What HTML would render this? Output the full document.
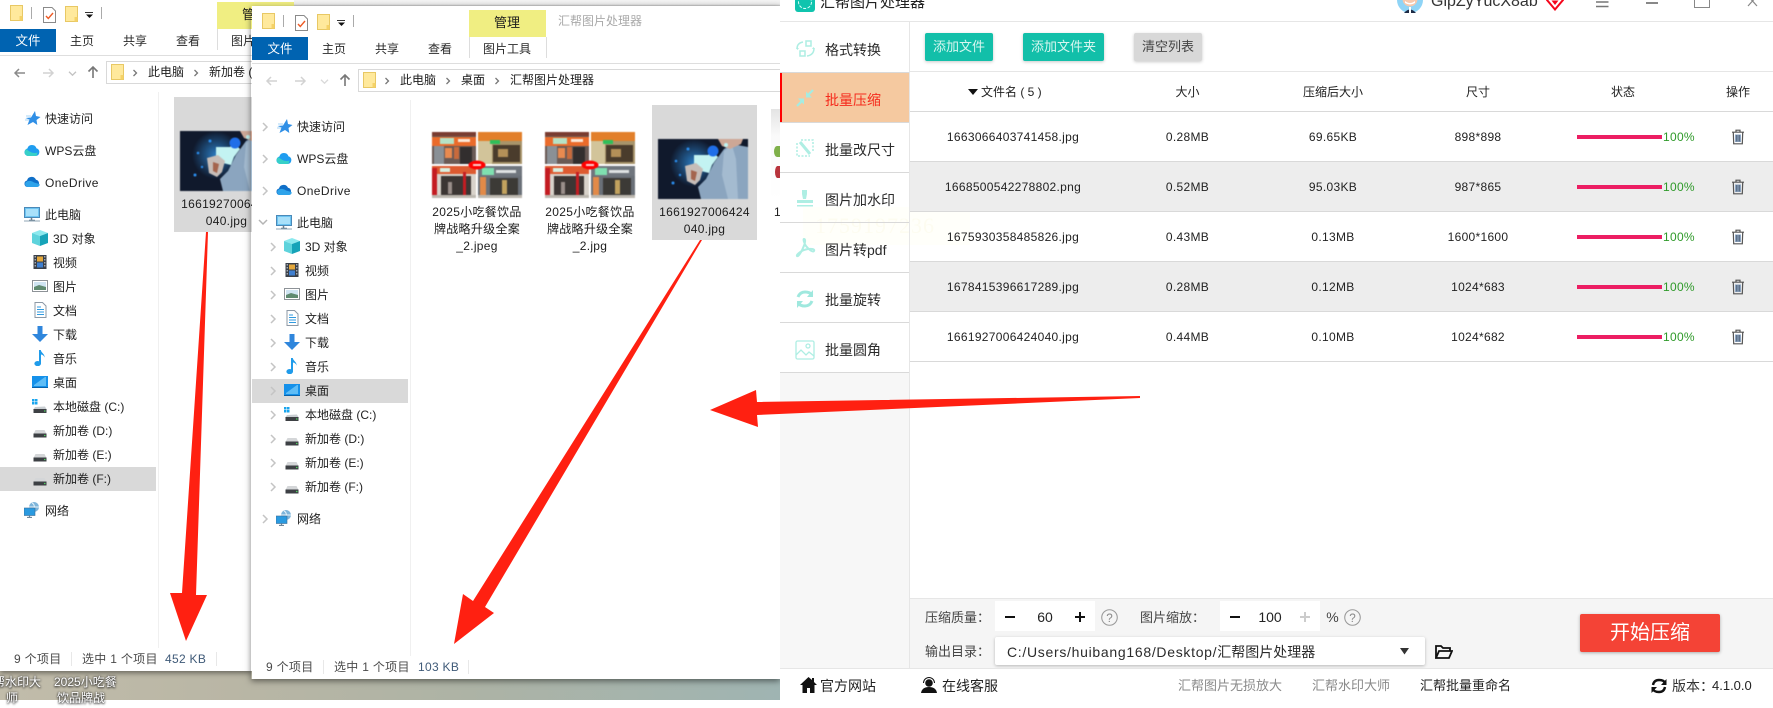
<!DOCTYPE html>
<html lang="zh-CN">
<head>
<meta charset="utf-8">
<title>汇帮图片处理器</title>
<style>
html,body{margin:0;padding:0;background:#fff}
body{position:relative;width:1773px;height:700px;overflow:hidden;font-family:"Liberation Sans","Noto Sans CJK SC",sans-serif;font-size:12px;color:#1c1c1c}
.a{position:absolute}
.t{position:absolute;white-space:nowrap;line-height:20px;height:20px;margin-top:-10px}
.c{transform:translateX(-50%)}
.ic{position:absolute;width:16px;height:16px;margin-top:-8px;overflow:visible}
.ch{position:absolute;width:8px;height:10px;margin-top:-5px;overflow:visible}
.win{position:absolute;width:528px;height:679px;overflow:hidden}
.bg{position:absolute;left:0;right:0;top:6px;bottom:0;background:#fff}
.n{letter-spacing:.3px}
.hl{background:#d9d9d9}
.side .t{color:#222;margin-top:-9px}
.st{color:#4a4a4a}
.tab{color:#2a2a2a}
.app .h{font-size:12px;color:#222}
.app .r{font-size:12px;letter-spacing:.3px;color:#222}
.m{font-size:14px;color:#2b2b2b}
.btn{position:absolute;top:33px;height:28px;line-height:28px;text-align:center;border-radius:2px;font-size:13px;color:#d8f6f0;background:#12bfa9;box-shadow:0 1px 3px rgba(0,0,0,.22)}
.bar{position:absolute;left:1577px;width:85px;height:4px;background:#ec1e63}
.pc{color:#2f9a2a;left:1663px;font-size:12px;letter-spacing:.3px}
.ln{position:absolute;height:1px;background:#d9d9d9}
.lab{font-size:13px;color:#444}
.th{filter:blur(.55px)}
</style>
</head>
<body>
<svg width="0" height="0" style="position:absolute">
<defs>
<symbol id="folder" viewBox="0 0 13 16"><rect x=".5" y=".5" width="12" height="15" fill="#ffe99c" stroke="#e8c864"/><rect x="9.500" y="11" width="3" height="4.500" fill="#f5d267"/></symbol>
<symbol id="note" viewBox="0 0 13 16"><path d="M.5.5h8.500l3.500 3.500v11.500H.5z" fill="#fff" stroke="#8a8a8a"/><path d="M3 9l2.300 2.500L10 6" fill="none" stroke="#ee5a24" stroke-width="1.400"/></symbol>
<symbol id="caret" viewBox="0 0 9 6"><path d="M0 0h8v1H0z" fill="#333"/><path d="M1 2.500h7L4.500 6z" fill="#111"/></symbol>
<symbol id="chev" viewBox="0 0 8 10"><path d="M2 1l4 4-4 4" fill="none" stroke="#c4c4c4" stroke-width="1.500"/></symbol>
<symbol id="chd" viewBox="0 0 10 8"><path d="M1 2l4 4 4-4" fill="none" stroke="#b4b4b4" stroke-width="1.500"/></symbol>
<symbol id="bc" viewBox="0 0 8 10"><path d="M2.500 2l3 3-3 3" fill="none" stroke="#777" stroke-width="1.300"/></symbol>
<symbol id="star" viewBox="0 0 16 16"><path d="M10 1l1 5 4.500 1-4 3 .8 5L8 12l-5.500 3 2-5.500L.5 8l5.500-.5z" fill="#2f8fe6"/><path d="M1 6h5M0 10h4" stroke="#a8d4f5"/></symbol>
<symbol id="wps" viewBox="0 0 16 16"><path d="M4 14a3.800 3.800 0 0 1-.6-7.500 4.700 4.700 0 0 1 9-.3A4 4 0 0 1 12 14z" fill="#1f9df0"/><path d="M4 14a3.800 3.800 0 0 1-1.500-7c3 3 7 5 11 3.500C13 12.500 12.500 14 12 14z" fill="#37d0c8"/></symbol>
<symbol id="od" viewBox="0 0 16 16"><path d="M3.500 13A3.300 3.300 0 0 1 3 6.500a4.800 4.800 0 0 1 9-.8A3.800 3.800 0 0 1 12.500 13z" fill="#0f6fc8"/><path d="M3.500 13A3 3 0 0 1 2 8c3-2 6-1 8 .5l5.500 1.500c.5 2-1 3-3 3z" fill="#2ea3ea"/></symbol>
<symbol id="pc" viewBox="0 0 16 16"><rect x=".5" y="1.500" width="15" height="10" fill="#6cc4f2" stroke="#4a89b8"/><rect x="2" y="3" width="12" height="7" fill="#a8e0fa"/><path d="M5 14.500h6M7.500 11.500v3" stroke="#6a7f90" stroke-width="1.500"/><path d="M0 15h16" stroke="#8fa4b4"/></symbol>
<symbol id="d3" viewBox="0 0 16 16"><path d="M8 0l8 3-8 3-8-3z" fill="#8ce9ee"/><path d="M0 3l8 3v10l-8-3z" fill="#5ed3dc"/><path d="M16 3L8 6v10l8-3z" fill="#16a3b8"/></symbol>
<symbol id="vid" viewBox="0 0 16 16"><rect x="1.500" y="1" width="13" height="14" fill="#3a3f48"/><rect x="5" y="2.500" width="6" height="5" fill="#e4a83c"/><rect x="5" y="8.500" width="6" height="5" fill="#3f7fd0"/><path d="M3.200 2v12M12.800 2v12" stroke="#cfd6de" stroke-dasharray="1.500 1.500"/></symbol>
<symbol id="pic" viewBox="0 0 16 16"><rect x=".5" y="2.500" width="15" height="11" fill="#fff" stroke="#8d9297"/><rect x="2" y="4" width="12" height="8" fill="#cfe4f2"/><path d="M2 9l5-2 7 2v3H2z" fill="#5f8a70"/></symbol>
<symbol id="doc" viewBox="0 0 16 16"><path d="M3 .5h7.500L14 4v11.500H3z" fill="#fff" stroke="#8d99a6"/><path d="M5 5h4M5 7.500h7M5 10h7M5 12.500h7" stroke="#2f9ae0"/></symbol>
<symbol id="dl" viewBox="0 0 16 16"><path d="M5.500 0h5v8H16l-8 8-8-8h5.500z" fill="#2f86dc"/></symbol>
<symbol id="mus" viewBox="0 0 16 16"><path d="M7 0h1.800c.5 3 4.200 4 3.700 7.500-.5-1.800-2-2.800-3.500-3v9a3.300 2.600 0 1 1-2-2.300z" fill="#1f9bea"/></symbol>
<symbol id="dsk" viewBox="0 0 16 16"><rect x="0" y="2" width="16" height="12" fill="#1591ea"/><path d="M2 11L13 3h1v9H2z" fill="#5fbdf6"/><path d="M0 13h16v1H0z" fill="#0a62a8"/></symbol>
<symbol id="hdc" viewBox="0 0 16 16"><path d="M3 9l10-.5L15 12H1z" fill="#c9ced2"/><rect x="1.500" y="11" width="13" height="4" fill="#3d4044"/><path d="M12 13h1.500" stroke="#4fd060" stroke-width="1.200"/><path d="M0 1h2.500v2.500H0zM3 1h2.500v2.500H3zM0 4h2.500v2.500H0zM3 4h2.500v2.500H3z" fill="#19a5ee"/></symbol>
<symbol id="hd" viewBox="0 0 16 16"><path d="M3.500 8h9l2 4h-13z" fill="#d4d6d8"/><rect x="1.500" y="11.500" width="13" height="4" fill="#3d4044"/><path d="M12 13.500h1.500" stroke="#4fd060" stroke-width="1.200"/></symbol>
<symbol id="net" viewBox="0 0 16 16"><circle cx="10" cy="5" r="5" fill="#7fb5da"/><path d="M8 1c3 1 3 6 1 9M5 5h10" stroke="#e8f4fb" fill="none"/><rect x="0" y="6" width="11" height="7.500" fill="#2a9ae0" stroke="#3a6d96" stroke-width=".6"/><path d="M3 15.500h5M5.500 13.500v2" stroke="#70879a" stroke-width="1.200"/></symbol>
<symbol id="shop" viewBox="0 0 90 66" preserveAspectRatio="none">
<rect width="90" height="66" fill="#fff"/>
<rect x="0" y="0" width="44" height="32" fill="#6a5a55"/><rect x="0" y="0" width="44" height="4" fill="#7a3c30"/><rect x="0" y="5" width="44" height="9" fill="#ea6b2b"/><rect x="2" y="14" width="10" height="18" fill="#8a9096"/><rect x="13" y="16" width="7" height="10" fill="#e88a50"/><rect x="22" y="15" width="5" height="12" fill="#c86a3c"/><rect x="28" y="15" width="12" height="17" fill="#322e2e"/><rect x="8" y="6" width="14" height="6" fill="#b6e2c6"/><rect x="26" y="7" width="12" height="3" fill="#fbe8d8"/>
<rect x="46" y="0" width="44" height="32" fill="#a8946a"/><rect x="46" y="0" width="44" height="9" fill="#e27f2a"/><rect x="46" y="9" width="14" height="23" fill="#d2c49a"/><rect x="61" y="13" width="27" height="17" fill="#4a3c2c"/><rect x="58" y="8" width="10" height="4" fill="#2fbf5a"/><rect x="66" y="17" width="10" height="8" fill="#b49058"/>
<rect x="0" y="34" width="44" height="32" fill="#d8d2ca"/><rect x="0" y="34" width="44" height="8" fill="#dd5a30"/><rect x="0" y="36" width="5" height="30" fill="#c41c22"/><rect x="9" y="44" width="30" height="19" fill="#3c3634"/><rect x="8" y="36" width="10" height="4" fill="#d8efe0"/><rect x="31" y="40" width="3" height="26" fill="#c41c22"/><rect x="16" y="50" width="4" height="12" fill="#9a8e8a"/>
<rect x="46" y="34" width="44" height="32" fill="#6a7078"/><rect x="46" y="34" width="44" height="10" fill="#70767e"/><rect x="48" y="45" width="6" height="18" fill="#e28a48"/><rect x="58" y="46" width="28" height="17" fill="#3c3a36"/><rect x="50" y="36" width="12" height="7" fill="#7fe0b0"/><rect x="64" y="38" width="20" height="3" fill="#dfe2e4"/><rect x="70" y="48" width="5" height="14" fill="#c2a25e"/><rect x="0" y="63" width="90" height="3" fill="#bdb8b0"/>
<rect x="44" y="0" width="2" height="66" fill="#fff"/><rect x="0" y="32" width="90" height="2" fill="#fff"/>
<ellipse cx="45" cy="33" rx="8.500" ry="4.500" fill="#f00"/><rect x="41" y="32" width="8" height="2" fill="#fbd0d0"/>
</symbol>
<radialGradient id="g1"><stop offset="0" stop-color="#35a4ff"/><stop offset="1" stop-color="#35a4ff" stop-opacity="0"/></radialGradient>
<symbol id="tech" viewBox="0 0 90 60" preserveAspectRatio="none">
<rect width="90" height="60" fill="#10192c"/>
<circle cx="36" cy="24" r="24" fill="url(#g1)" opacity=".7"/>
<path d="M90 60H43l-3-12 8-8 8-16 10-14 8-5 16 3z" fill="#8ba5bf"/>
<path d="M66 12l8-6 4 14 2 40H70l-6-24z" fill="#a4bbd0"/>
<path d="M60 0h25l-2 5-11 5-8-3z" fill="#cda796"/>
<path d="M36 16h14l4-4 6 6-6 8-3 8-8-2-7-6z" fill="#c3f3f2"/>
<circle cx="55" cy="12" r="5.500" fill="#1f6ee8"/>
<path d="M27 27l11-3 7 6-3 11-5 5-8-4z" fill="#c6bdb8"/>
<path d="M33 31l6 2-2 9-4-2z" fill="#a4654e"/>
<circle cx="15" cy="44" r="1.500" fill="#2a8ef0"/><circle cx="18" cy="22" r="1.300" fill="#2a8ef0"/><circle cx="22" cy="36" r="1.200" fill="#2a8ef0"/><circle cx="30" cy="10" r="1.500" fill="#2a8ef0"/><circle cx="68" cy="6" r="2" fill="#bff4f2"/>
</symbol>
<symbol id="trash" viewBox="0 0 14 16"><path d="M1 3.200h12M5 3V1.200h4V3" fill="none" stroke="#555" stroke-width="1.200"/><path d="M2.300 3.500l.4 11.300h8.600l.4-11.300" fill="none" stroke="#555" stroke-width="1.200"/><path d="M4 5.500h6v7.500H4z" fill="#8ea7c4"/><path d="M5.500 6v6.500M7 6v6.500M8.500 6v6.500" stroke="#4a5a70" stroke-width=".7"/></symbol>
<symbol id="q" viewBox="0 0 16 16"><circle cx="8" cy="8" r="7.300" fill="none" stroke="#999"/><text x="8" y="12" font-size="11" text-anchor="middle" fill="#888" font-family="Liberation Sans">?</text></symbol>
</defs>
</svg>

<!-- desktop behind windows -->
<div class="a" style="left:0;top:640px;width:780px;height:60px;background:linear-gradient(90deg,#c1bcaa 0,#b9b6a5 30%,#adb3a5 60%,#9fb4b2 100%)"></div>
<div class="t" style="left:-7px;top:682px;color:#fff;text-shadow:0 0 2px #333,0 1px 2px #222">帮水印大</div>
<div class="t" style="left:54px;top:682px;color:#fff;text-shadow:0 0 2px #333,0 1px 2px #222">2025小吃餐</div>
<div class="t" style="left:6px;top:698px;color:#fff;text-shadow:0 0 2px #333,0 1px 2px #222">师</div>
<div class="t" style="left:57px;top:698px;color:#fff;text-shadow:0 0 2px #333,0 1px 2px #222">饮品牌战</div>

<!-- window 1 -->
<div class="a" style="left:0;top:0;width:252px;height:671px;box-shadow:0 2px 5px rgba(0,0,0,.45)"></div>
<div class="win" style="left:0;top:-8px">
 <div class="bg"></div>
 <div class="a" style="left:217px;top:10px;width:77px;height:27px;background:#f0ee82"></div>
 <div class="t c" style="left:255px;top:23px;font-size:13px">管理</div>
 <svg class="a" style="left:10px;top:13px" width="13" height="16"><use href="#folder"/></svg>
 <div class="a" style="left:31px;top:15px;width:1px;height:12px;background:#aaa"></div>
 <svg class="a" style="left:43px;top:15px" width="13" height="16"><use href="#note"/></svg>
 <svg class="a" style="left:65px;top:14px" width="13" height="16"><use href="#folder"/></svg>
 <svg class="a" style="left:85px;top:20px" width="9" height="6"><use href="#caret"/></svg>
 <div class="a" style="left:101px;top:15px;width:1px;height:12px;background:#aaa"></div>
 <div class="a" style="left:0;top:37px;width:56px;height:23px;background:#0063b1"></div>
 <div class="t c" style="left:28px;top:49px;color:#fff;font-size:12.500px">文件</div>
 <div class="t c tab" style="left:82px;top:49px">主页</div>
 <div class="t c tab" style="left:135px;top:49px">共享</div>
 <div class="t c tab" style="left:188px;top:49px">查看</div>
 <div class="a" style="left:217px;top:37px;width:1px;height:21px;background:#ddd"></div>
 <div class="t c tab" style="left:255px;top:49px">图片工具</div>
 <div class="ln" style="left:0;top:63px;width:528px;background:#dedede"></div>
 <svg class="a" style="left:13px;top:74px" width="12" height="14"><path d="M12 7H2M6 3L2 7l4 4" fill="none" stroke="#8a8a8a" stroke-width="1.500"/></svg>
 <svg class="a" style="left:43px;top:74px" width="12" height="14"><path d="M0 7h10M6 3l4 4-4 4" fill="none" stroke="#d2d2d2" stroke-width="1.500"/></svg>
 <svg class="a" style="left:68px;top:78px;opacity:.8" width="9" height="7"><use href="#chd"/></svg>
 <svg class="a" style="left:87px;top:73px" width="12" height="14"><path d="M6 13V2M1.500 6.500L6 2l4.500 4.500" fill="none" stroke="#777" stroke-width="1.600"/></svg>
 <div class="a" style="left:106px;top:69px;width:440px;height:21px;border:1px solid #d9d9d9"></div>
 <svg class="a" style="left:111px;top:72px" width="13" height="16"><use href="#folder"/></svg>
 <svg class="ch" style="left:131px;top:81px"><use href="#bc"/></svg>
 <div class="t" style="left:148px;top:80px">此电脑</div>
 <svg class="ch" style="left:192px;top:81px"><use href="#bc"/></svg>
 <div class="t" style="left:209px;top:80px">新加卷 (F:)</div>
 <div class="a" style="left:158px;top:100px;width:1px;height:556px;background:#f0f0f0"></div>
 <div class="side">
  <div class="a hl" style="left:0;top:475px;width:156px;height:24px"></div>
  <svg class="ic" style="left:25px;top:126px"><use href="#star"/></svg><div class="t" style="left:45px;top:126px">快速访问</div>
  <svg class="ic" style="left:24px;top:158px"><use href="#wps"/></svg><div class="t" style="left:45px;top:158px">WPS云盘</div>
  <svg class="ic" style="left:24px;top:190px"><use href="#od"/></svg><div class="t" style="left:45px;top:190px;letter-spacing:.4px">OneDrive</div>
  <svg class="ic" style="left:24px;top:222px"><use href="#pc"/></svg><div class="t" style="left:45px;top:222px">此电脑</div>
  <svg class="ic" style="left:32px;top:246px"><use href="#d3"/></svg><div class="t" style="left:53px;top:246px">3D 对象</div>
  <svg class="ic" style="left:32px;top:270px"><use href="#vid"/></svg><div class="t" style="left:53px;top:270px">视频</div>
  <svg class="ic" style="left:32px;top:294px"><use href="#pic"/></svg><div class="t" style="left:53px;top:294px">图片</div>
  <svg class="ic" style="left:32px;top:318px"><use href="#doc"/></svg><div class="t" style="left:53px;top:318px">文档</div>
  <svg class="ic" style="left:32px;top:342px"><use href="#dl"/></svg><div class="t" style="left:53px;top:342px">下载</div>
  <svg class="ic" style="left:32px;top:366px"><use href="#mus"/></svg><div class="t" style="left:53px;top:366px">音乐</div>
  <svg class="ic" style="left:32px;top:390px"><use href="#dsk"/></svg><div class="t" style="left:53px;top:390px">桌面</div>
  <svg class="ic" style="left:32px;top:414px"><use href="#hdc"/></svg><div class="t" style="left:53px;top:414px">本地磁盘 (C:)</div>
  <svg class="ic" style="left:32px;top:438px"><use href="#hd"/></svg><div class="t" style="left:53px;top:438px">新加卷 (D:)</div>
  <svg class="ic" style="left:32px;top:462px"><use href="#hd"/></svg><div class="t" style="left:53px;top:462px">新加卷 (E:)</div>
  <svg class="ic" style="left:32px;top:486px"><use href="#hd"/></svg><div class="t" style="left:53px;top:486px">新加卷 (F:)</div>
  <svg class="ic" style="left:24px;top:518px"><use href="#net"/></svg><div class="t" style="left:45px;top:518px">网络</div>
 </div>
 <div class="a hl" style="left:174px;top:105px;width:105px;height:135px"></div>
 <svg class="a th" style="left:180px;top:139px" width="90" height="60"><use href="#tech" width="90" height="60"/></svg>
 <div class="t c n" style="left:226.500px;top:212px">1661927006424</div>
 <div class="t c n" style="left:226.500px;top:229px">040.jpg</div>
 <div class="t st n" style="left:14px;top:667px">9 个项目</div>
 <div class="a" style="left:71px;top:660px;width:1px;height:14px;background:#e8e8e8"></div>
 <div class="t st n" style="left:82px;top:667px">选中 1 个项目</div>
 <div class="t n" style="left:165px;top:667px;color:#3f5a78">452 KB</div>
 <div class="a" style="left:216px;top:660px;width:1px;height:14px;background:#e8e8e8"></div>
</div>

<!-- band above window 2 -->
<div class="a" style="left:294px;top:0;width:486px;height:7px;background:linear-gradient(#f4f4f4 0,#ececec 60%,#a8a8a8 100%)"></div>

<!-- window 2 -->
<div class="a" style="left:251px;top:6px;width:529px;height:673px;box-shadow:0 2px 6px rgba(0,0,0,.5)"></div>
<div class="win" style="left:252px;top:0">
 <div class="bg"></div>
 <div class="a" style="left:217px;top:10px;width:77px;height:27px;background:#f0ee82"></div>
 <div class="t c" style="left:255px;top:23px;font-size:13px">管理</div>
 <div class="t" style="left:306px;top:21px;color:#a9a9a9">汇帮图片处理器</div>
 <svg class="a" style="left:10px;top:13px" width="13" height="16"><use href="#folder"/></svg>
 <div class="a" style="left:31px;top:15px;width:1px;height:12px;background:#aaa"></div>
 <svg class="a" style="left:43px;top:15px" width="13" height="16"><use href="#note"/></svg>
 <svg class="a" style="left:65px;top:14px" width="13" height="16"><use href="#folder"/></svg>
 <svg class="a" style="left:85px;top:20px" width="9" height="6"><use href="#caret"/></svg>
 <div class="a" style="left:101px;top:15px;width:1px;height:12px;background:#aaa"></div>
 <div class="a" style="left:0;top:37px;width:56px;height:23px;background:#0063b1"></div>
 <div class="t c" style="left:28px;top:49px;color:#fff;font-size:12.500px">文件</div>
 <div class="t c tab" style="left:82px;top:49px">主页</div>
 <div class="t c tab" style="left:135px;top:49px">共享</div>
 <div class="t c tab" style="left:188px;top:49px">查看</div>
 <div class="a" style="left:217px;top:37px;width:1px;height:21px;background:#ddd"></div>
 <div class="a" style="left:294px;top:37px;width:1px;height:21px;background:#ddd"></div>
 <div class="t c tab" style="left:255px;top:49px">图片工具</div>
 <div class="ln" style="left:0;top:63px;width:528px;background:#dedede"></div>
 <svg class="a" style="left:13px;top:74px" width="12" height="14"><path d="M12 7H2M6 3L2 7l4 4" fill="none" stroke="#d2d2d2" stroke-width="1.500"/></svg>
 <svg class="a" style="left:43px;top:74px" width="12" height="14"><path d="M0 7h10M6 3l4 4-4 4" fill="none" stroke="#d2d2d2" stroke-width="1.500"/></svg>
 <svg class="a" style="left:68px;top:78px;opacity:.5" width="9" height="7"><use href="#chd"/></svg>
 <svg class="a" style="left:87px;top:73px" width="12" height="14"><path d="M6 13V2M1.500 6.500L6 2l4.500 4.500" fill="none" stroke="#777" stroke-width="1.600"/></svg>
 <div class="a" style="left:106px;top:69px;width:440px;height:21px;border:1px solid #d9d9d9"></div>
 <svg class="a" style="left:111px;top:72px" width="13" height="16"><use href="#folder"/></svg>
 <svg class="ch" style="left:131px;top:81px"><use href="#bc"/></svg>
 <div class="t" style="left:148px;top:80px">此电脑</div>
 <svg class="ch" style="left:192px;top:81px"><use href="#bc"/></svg>
 <div class="t" style="left:209px;top:80px">桌面</div>
 <svg class="ch" style="left:241px;top:81px"><use href="#bc"/></svg>
 <div class="t" style="left:258px;top:80px">汇帮图片处理器</div>
 <div class="a" style="left:158px;top:100px;width:1px;height:556px;background:#f0f0f0"></div>
 <div class="side">
  <div class="a hl" style="left:0;top:379px;width:156px;height:24px"></div>
  <svg class="ch" style="left:9px;top:127px"><use href="#chev"/></svg><svg class="ic" style="left:25px;top:126px"><use href="#star"/></svg><div class="t" style="left:45px;top:126px">快速访问</div>
  <svg class="ch" style="left:9px;top:159px"><use href="#chev"/></svg><svg class="ic" style="left:24px;top:158px"><use href="#wps"/></svg><div class="t" style="left:45px;top:158px">WPS云盘</div>
  <svg class="ch" style="left:9px;top:191px"><use href="#chev"/></svg><svg class="ic" style="left:24px;top:190px"><use href="#od"/></svg><div class="t" style="left:45px;top:190px;letter-spacing:.4px">OneDrive</div>
  <svg class="a" style="left:6px;top:218px" width="10" height="8"><use href="#chd"/></svg><svg class="ic" style="left:24px;top:222px"><use href="#pc"/></svg><div class="t" style="left:45px;top:222px">此电脑</div>
  <svg class="ch" style="left:17px;top:247px"><use href="#chev"/></svg><svg class="ic" style="left:32px;top:246px"><use href="#d3"/></svg><div class="t" style="left:53px;top:246px">3D 对象</div>
  <svg class="ch" style="left:17px;top:271px"><use href="#chev"/></svg><svg class="ic" style="left:32px;top:270px"><use href="#vid"/></svg><div class="t" style="left:53px;top:270px">视频</div>
  <svg class="ch" style="left:17px;top:295px"><use href="#chev"/></svg><svg class="ic" style="left:32px;top:294px"><use href="#pic"/></svg><div class="t" style="left:53px;top:294px">图片</div>
  <svg class="ch" style="left:17px;top:319px"><use href="#chev"/></svg><svg class="ic" style="left:32px;top:318px"><use href="#doc"/></svg><div class="t" style="left:53px;top:318px">文档</div>
  <svg class="ch" style="left:17px;top:343px"><use href="#chev"/></svg><svg class="ic" style="left:32px;top:342px"><use href="#dl"/></svg><div class="t" style="left:53px;top:342px">下载</div>
  <svg class="ch" style="left:17px;top:367px"><use href="#chev"/></svg><svg class="ic" style="left:32px;top:366px"><use href="#mus"/></svg><div class="t" style="left:53px;top:366px">音乐</div>
  <svg class="ch" style="left:17px;top:391px"><use href="#chev"/></svg><svg class="ic" style="left:32px;top:390px"><use href="#dsk"/></svg><div class="t" style="left:53px;top:390px">桌面</div>
  <svg class="ch" style="left:17px;top:415px"><use href="#chev"/></svg><svg class="ic" style="left:32px;top:414px"><use href="#hdc"/></svg><div class="t" style="left:53px;top:414px">本地磁盘 (C:)</div>
  <svg class="ch" style="left:17px;top:439px"><use href="#chev"/></svg><svg class="ic" style="left:32px;top:438px"><use href="#hd"/></svg><div class="t" style="left:53px;top:438px">新加卷 (D:)</div>
  <svg class="ch" style="left:17px;top:463px"><use href="#chev"/></svg><svg class="ic" style="left:32px;top:462px"><use href="#hd"/></svg><div class="t" style="left:53px;top:462px">新加卷 (E:)</div>
  <svg class="ch" style="left:17px;top:487px"><use href="#chev"/></svg><svg class="ic" style="left:32px;top:486px"><use href="#hd"/></svg><div class="t" style="left:53px;top:486px">新加卷 (F:)</div>
  <svg class="ch" style="left:9px;top:519px"><use href="#chev"/></svg><svg class="ic" style="left:24px;top:518px"><use href="#net"/></svg><div class="t" style="left:45px;top:518px">网络</div>
 </div>
 <svg class="a th" style="left:180px;top:132px" width="90" height="66"><use href="#shop" width="90" height="66"/></svg>
 <div class="t c n" style="left:225px;top:212px">2025小吃餐饮品</div>
 <div class="t c n" style="left:225px;top:229px">牌战略升级全案</div>
 <div class="t c n" style="left:225px;top:246px">_2.jpeg</div>
 <svg class="a th" style="left:293px;top:132px" width="90" height="66"><use href="#shop" width="90" height="66"/></svg>
 <div class="t c n" style="left:338px;top:212px">2025小吃餐饮品</div>
 <div class="t c n" style="left:338px;top:229px">牌战略升级全案</div>
 <div class="t c n" style="left:338px;top:246px">_2.jpg</div>
 <div class="a hl" style="left:400px;top:105px;width:105px;height:135px"></div>
 <svg class="a th" style="left:406px;top:139px" width="90" height="60"><use href="#tech" width="90" height="60"/></svg>
 <div class="t c n" style="left:452.500px;top:212px">1661927006424</div>
 <div class="t c n" style="left:452.500px;top:229px">040.jpg</div>
 <div class="a" style="left:519px;top:109px;width:9px;height:91px;background:linear-gradient(#e4e4e4,#fafafa 30%,#fff)"></div>
 <div class="a" style="left:522px;top:146px;width:6px;height:11px;background:#7fb04a;border-radius:50% 0 0 50%"></div>
 <div class="a" style="left:523px;top:166px;width:5px;height:12px;background:#b8343c;border-radius:50% 0 0 50%"></div>
 <div class="t n" style="left:522px;top:212px">16</div>
 <div class="t st n" style="left:14px;top:667px">9 个项目</div>
 <div class="a" style="left:71px;top:660px;width:1px;height:14px;background:#e8e8e8"></div>
 <div class="t st n" style="left:82px;top:667px">选中 1 个项目</div>
 <div class="t n" style="left:166px;top:667px;color:#3f5a78">103 KB</div>
 <div class="a" style="left:216px;top:660px;width:1px;height:14px;background:#e8e8e8"></div>
</div>

<!-- right app -->
<div class="app">
 <div class="a" style="left:780px;top:0;width:993px;height:700px;background:#fff"></div>
 <svg class="a" style="left:795px;top:-8px" width="20" height="20"><rect width="20" height="20" rx="3" fill="#10c4ae"/><circle cx="10" cy="10" r="6.500" fill="none" stroke="#d8fff8" stroke-dasharray="3 1.500"/></svg>
 <div class="t" style="left:820px;top:3px;font-size:15px;color:#222">汇帮图片处理器</div>
 <svg class="a" style="left:1397px;top:-13px" width="26" height="26"><circle cx="13" cy="13" r="13" fill="#8fd4f6"/><circle cx="13" cy="12" r="7.500" fill="#f6c9ae"/><path d="M8 14q5 4 10 0v2q-5 3-10 0z" fill="#fff"/><path d="M7 26q6-7 12 0z" fill="#1d2a44"/><path d="M12 20h2v6h-2z" fill="#fff"/></svg>
 <div class="t" style="left:1431px;top:2px;font-size:16px;color:#333">GipZyYucX8ab</div>
 <svg class="a" style="left:1546px;top:-6px" width="18" height="17"><path d="M9 15.500L1 6l3-6h10l3 6z" fill="none" stroke="#f5061c" stroke-width="2"/><path d="M9 11L5.500 6.500h7z" fill="#f5061c"/></svg>
 <svg class="a" style="left:1596px;top:0" width="13" height="8"><path d="M0 2h12.500M0 6.500h12.500" stroke="#777" stroke-width="1.600"/></svg>
 <div class="a" style="left:1646px;top:2px;width:12px;height:2px;background:#888"></div>
 <div class="a" style="left:1694px;top:-4px;width:14px;height:11px;border:1.500px solid #888;border-top:0"></div>
 <svg class="a" style="left:1747px;top:-5px" width="11" height="12"><path d="M1 1l9 10M10 1L1 11" stroke="#888" stroke-width="1.200"/></svg>
 <div class="ln" style="left:780px;top:21px;width:993px;background:#e6e6e6"></div>

 <!-- sidebar -->
 <div class="a" style="left:780px;top:22px;width:129px;height:350px;background:#fff"></div>
 <div class="a" style="left:803px;top:207px;width:167px;height:38px;background:#fffffa"></div>
 <div class="t" style="left:815px;top:226px;font-family:'Liberation Serif',serif;font-size:22px;letter-spacing:1px;color:#fdfcf0">1759197236</div>
 <div class="a" style="left:780px;top:373px;width:129px;height:295px;background:#f7f7f7"></div>
 <div class="a" style="left:909px;top:22px;width:1px;height:646px;background:#e6e6e6"></div>
 <div class="a" style="left:780px;top:73px;width:129px;height:49px;background:#f5c9a0"></div>
 <div class="a" style="left:780px;top:73px;width:2px;height:49px;background:#f00"></div>
 <div class="ln" style="left:780px;top:72px;width:129px"></div>
 <div class="ln" style="left:780px;top:122px;width:129px"></div>
 <div class="ln" style="left:780px;top:172px;width:129px"></div>
 <div class="ln" style="left:780px;top:222px;width:129px"></div>
 <div class="ln" style="left:780px;top:272px;width:129px"></div>
 <div class="ln" style="left:780px;top:322px;width:129px"></div>
 <div class="ln" style="left:780px;top:372px;width:129px"></div>

 <svg class="a" style="left:796px;top:40px" width="20" height="18" fill="none" stroke="#aeeee3" stroke-width="1.500"><rect x="10" y="1" width="5" height="5"/><rect x="4" y="11" width="5" height="5"/><path d="M1 9q0-6 6-7M18 8q0 7-7 8"/><path d="M0 8h3l-1.500 2zM16 9h3l-1.500-2z" fill="#aeeee3" stroke="none"/></svg>
 <div class="t m" style="left:825px;top:50px">格式转换</div>
 <svg class="a" style="left:796px;top:89px" width="18" height="18" fill="none" stroke="#a4ece2" stroke-width="2.200"><path d="M17 1l-5 5M1 17l5-5"/><path d="M10 2.500v6h6zM8 15.500v-6H2z" fill="#a4ece2" stroke="none"/></svg>
 <div class="t m" style="left:825px;top:100px;color:#f52a1c">批量压缩</div>
 <svg class="a" style="left:796px;top:139px" width="18" height="18" fill="none" stroke="#aeeee3" stroke-width="1.500"><path d="M1 4v13h13" stroke-dasharray="2 1.500"/><path d="M5 1h12v12" stroke-dasharray="2 1.500"/><path d="M4 3l10 12" stroke-width="3"/></svg>
 <div class="t m" style="left:825px;top:150px">批量改尺寸</div>
 <svg class="a" style="left:797px;top:190px" width="16" height="17" fill="#aeeee3"><path d="M5 0h5v4L9 9H6L5 4z"/><rect x="0" y="10" width="16" height="3"/><rect x="0" y="15" width="16" height="1.500"/></svg>
 <div class="t m" style="left:825px;top:200px">图片加水印</div>
 <svg class="a" style="left:795px;top:238px" width="21" height="21" fill="none" stroke="#aeeee3" stroke-width="2"><path d="M9 1c2 0 1 5-1 9-2 5-5 9-6 8-1-1 4-6 11-7 4-.5 7 0 6 2-1 1.500-5-1-8-5C9 5 8 1 9 1z"/></svg>
 <div class="t m" style="left:825px;top:250px">图片转pdf</div>
 <svg class="a" style="left:796px;top:290px" width="18" height="18" fill="none" stroke="#9fe8de" stroke-width="3"><path d="M2 7q2-5 7-5t7 3M16 11q-2 5-7 5t-7-3"/><path d="M17 0v7h-6zM1 18v-7h6z" fill="#9fe8de" stroke="none"/></svg>
 <div class="t m" style="left:825px;top:300px">批量旋转</div>
 <svg class="a" style="left:795px;top:340px" width="20" height="20" fill="none" stroke="#aeeee3" stroke-width="1.300"><rect x="1" y="1" width="18" height="18" rx="1.500"/><circle cx="13" cy="6" r="2"/><path d="M1 15l5-5 5 5 3-3 5 4"/></svg>
 <div class="t m" style="left:825px;top:350px">批量圆角</div>

 <!-- toolbar -->
 <div class="btn" style="left:925px;width:68px">添加文件</div>
 <div class="btn" style="left:1023px;width:81px">添加文件夹</div>
 <div class="btn" style="left:1134px;width:68px;background:#d8d8d8;color:#444">清空列表</div>
 <div class="ln" style="left:910px;top:71px;width:863px;background:#e6e6e6"></div>

 <!-- table -->
 <svg class="a" style="left:968px;top:89px" width="10" height="6"><path d="M0 0h10L5 6z" fill="#111"/></svg>
 <div class="t h" style="left:981px;top:92px">文件名 ( 5 )</div>
 <div class="t c h" style="left:1187.500px;top:92px">大小</div>
 <div class="t c h" style="left:1333px;top:92px">压缩后大小</div>
 <div class="t c h" style="left:1478px;top:92px">尺寸</div>
 <div class="t c h" style="left:1623px;top:92px">状态</div>
 <div class="t c h" style="left:1738px;top:92px">操作</div>
 <div class="ln" style="left:910px;top:111px;width:863px"></div>

 <div class="a" style="left:910px;top:162px;width:863px;height:49px;background:#ededed"></div>
 <div class="a" style="left:910px;top:262px;width:863px;height:49px;background:#ededed"></div>
 <div class="ln" style="left:910px;top:161px;width:863px"></div>
 <div class="ln" style="left:910px;top:211px;width:863px"></div>
 <div class="ln" style="left:910px;top:261px;width:863px"></div>
 <div class="ln" style="left:910px;top:311px;width:863px"></div>
 <div class="ln" style="left:910px;top:361px;width:863px"></div>

 <div class="t c r" style="left:1013px;top:137px">1663066403741458.jpg</div>
 <div class="t c r" style="left:1187.500px;top:137px">0.28MB</div>
 <div class="t c r" style="left:1333px;top:137px">69.65KB</div>
 <div class="t c r" style="left:1478px;top:137px">898*898</div>
 <div class="bar" style="top:135px"></div><div class="t pc" style="top:137px">100%</div>
 <svg class="a" style="left:1731px;top:129px" width="14" height="16"><use href="#trash"/></svg>

 <div class="t c r" style="left:1013px;top:187px">1668500542278802.png</div>
 <div class="t c r" style="left:1187.500px;top:187px">0.52MB</div>
 <div class="t c r" style="left:1333px;top:187px">95.03KB</div>
 <div class="t c r" style="left:1478px;top:187px">987*865</div>
 <div class="bar" style="top:185px"></div><div class="t pc" style="top:187px">100%</div>
 <svg class="a" style="left:1731px;top:179px" width="14" height="16"><use href="#trash"/></svg>

 <div class="t c r" style="left:1013px;top:237px">1675930358485826.jpg</div>
 <div class="t c r" style="left:1187.500px;top:237px">0.43MB</div>
 <div class="t c r" style="left:1333px;top:237px">0.13MB</div>
 <div class="t c r" style="left:1478px;top:237px">1600*1600</div>
 <div class="bar" style="top:235px"></div><div class="t pc" style="top:237px">100%</div>
 <svg class="a" style="left:1731px;top:229px" width="14" height="16"><use href="#trash"/></svg>

 <div class="t c r" style="left:1013px;top:287px">1678415396617289.jpg</div>
 <div class="t c r" style="left:1187.500px;top:287px">0.28MB</div>
 <div class="t c r" style="left:1333px;top:287px">0.12MB</div>
 <div class="t c r" style="left:1478px;top:287px">1024*683</div>
 <div class="bar" style="top:285px"></div><div class="t pc" style="top:287px">100%</div>
 <svg class="a" style="left:1731px;top:279px" width="14" height="16"><use href="#trash"/></svg>

 <div class="t c r" style="left:1013px;top:337px">1661927006424040.jpg</div>
 <div class="t c r" style="left:1187.500px;top:337px">0.44MB</div>
 <div class="t c r" style="left:1333px;top:337px">0.10MB</div>
 <div class="t c r" style="left:1478px;top:337px">1024*682</div>
 <div class="bar" style="top:335px"></div><div class="t pc" style="top:337px">100%</div>
 <svg class="a" style="left:1731px;top:329px" width="14" height="16"><use href="#trash"/></svg>

 <!-- bottom controls -->
 <div class="a" style="left:910px;top:598px;width:863px;height:70px;background:#f5f5f5;border-top:1px solid #e6e6e6;box-sizing:border-box"></div>
 <div class="t lab" style="left:925px;top:618px">压缩质量：</div>
 <div class="a" style="left:995px;top:601px;width:100px;height:30px;background:#fff"></div>
 <div class="a" style="left:1005px;top:616px;width:10px;height:2px;background:#111"></div>
 <div class="t c m" style="left:1045px;top:617px;color:#222">60</div>
 <div class="a" style="left:1075px;top:616px;width:10px;height:2px;background:#111"></div>
 <div class="a" style="left:1079px;top:612px;width:2px;height:10px;background:#111"></div>
 <svg class="a" style="left:1101px;top:609px" width="17" height="17"><use href="#q"/></svg>
 <div class="t lab" style="left:1140px;top:618px">图片缩放：</div>
 <div class="a" style="left:1220px;top:601px;width:100px;height:30px;background:#fff"></div>
 <div class="a" style="left:1230px;top:616px;width:10px;height:2px;background:#111"></div>
 <div class="t c m" style="left:1270px;top:617px;color:#222">100</div>
 <div class="a" style="left:1300px;top:616px;width:10px;height:2px;background:#ccc"></div>
 <div class="a" style="left:1304px;top:612px;width:2px;height:10px;background:#ccc"></div>
 <div class="t c" style="left:1332.500px;top:617px;font-size:14px;color:#444">%</div>
 <svg class="a" style="left:1344px;top:609px" width="17" height="17"><use href="#q"/></svg>
 <div class="a" style="left:1580px;top:614px;width:140px;height:38px;line-height:39px;text-align:center;background:#f44336;color:#fff;font-size:20px;border-radius:2px;box-shadow:0 1px 3px rgba(0,0,0,.3)">开始压缩</div>
 <div class="t lab" style="left:925px;top:652px">输出目录：</div>
 <div class="a" style="left:995px;top:637px;width:430px;height:28px;background:#fff;border-radius:2px;box-shadow:0 1px 3px rgba(0,0,0,.25)"></div>
 <div class="t" style="left:1007px;top:652px;font-size:14px;color:#2b2b2b"><span style="letter-spacing:.7px">C:/Users/huibang168/Desktop/</span>汇帮图片处理器</div>
 <svg class="a" style="left:1400px;top:648px" width="10" height="7"><path d="M0 0h9L4.500 6.500z" fill="#333"/></svg>
 <svg class="a" style="left:1435px;top:644px" width="18" height="16" fill="none" stroke="#111" stroke-width="1.800"><path d="M1 14V2h5l2 2h7v3"/><path d="M1 14l3-7h13l-3 7z"/></svg>

 <!-- footer -->
 <div class="ln" style="left:780px;top:668px;width:993px;background:#e6e6e6"></div>
 <svg class="a" style="left:800px;top:677px" width="17" height="16"><path d="M8.500 0L0 8h2.500v8h4.500v-5h3v5h4.500V8H17l-3-3V1h-2v2z" fill="#111"/></svg>
 <div class="t m" style="left:820px;top:686px;color:#222">官方网站</div>
 <svg class="a" style="left:921px;top:677px" width="16" height="16"><circle cx="8" cy="6" r="3.800" fill="#111"/><path d="M2.500 6a5.500 5.500 0 0 1 11 0" fill="none" stroke="#111"/><path d="M0 16q1-6 8-6t8 6z" fill="#111"/></svg>
 <div class="t m" style="left:942px;top:686px;color:#222">在线客服</div>
 <div class="t" style="left:1178px;top:686px;font-size:13px;color:#8a8a8a">汇帮图片无损放大</div>
 <div class="t" style="left:1312px;top:686px;font-size:13px;color:#8a8a8a">汇帮水印大师</div>
 <div class="t" style="left:1420px;top:686px;font-size:13px;color:#222">汇帮批量重命名</div>
 <svg class="a" style="left:1651px;top:678px" width="16" height="16" fill="none" stroke="#111" stroke-width="2.400"><path d="M2 7q1-5 6-5t6 3M14 9q-1 5-6 5t-6-3"/><path d="M15.500 1v6h-5.500zM.5 15V9H6z" fill="#111" stroke="none"/></svg>
 <div class="t" style="left:1672px;top:686px;font-size:14px;color:#333">版本：</div>
 <div class="t" style="left:1712px;top:686px;font-size:13px;color:#222">4.1.0.0</div>
</div>

<!-- arrows -->
<svg class="a" style="left:0;top:0;pointer-events:none" width="1773" height="700">
 <polygon fill="#ff2011" points="206,232 208,232 196,595 207,595 186,641 170,593 182,593"/>
 <polygon fill="#ff2011" points="700,240 702,240 485,607 494,613 454,644 463,594 473,601"/>
 <polygon fill="#ff2011" points="1140,396 1140,398 757,415 758,427 710,410 756,390 757,402"/>
</svg>
</body>
</html>
